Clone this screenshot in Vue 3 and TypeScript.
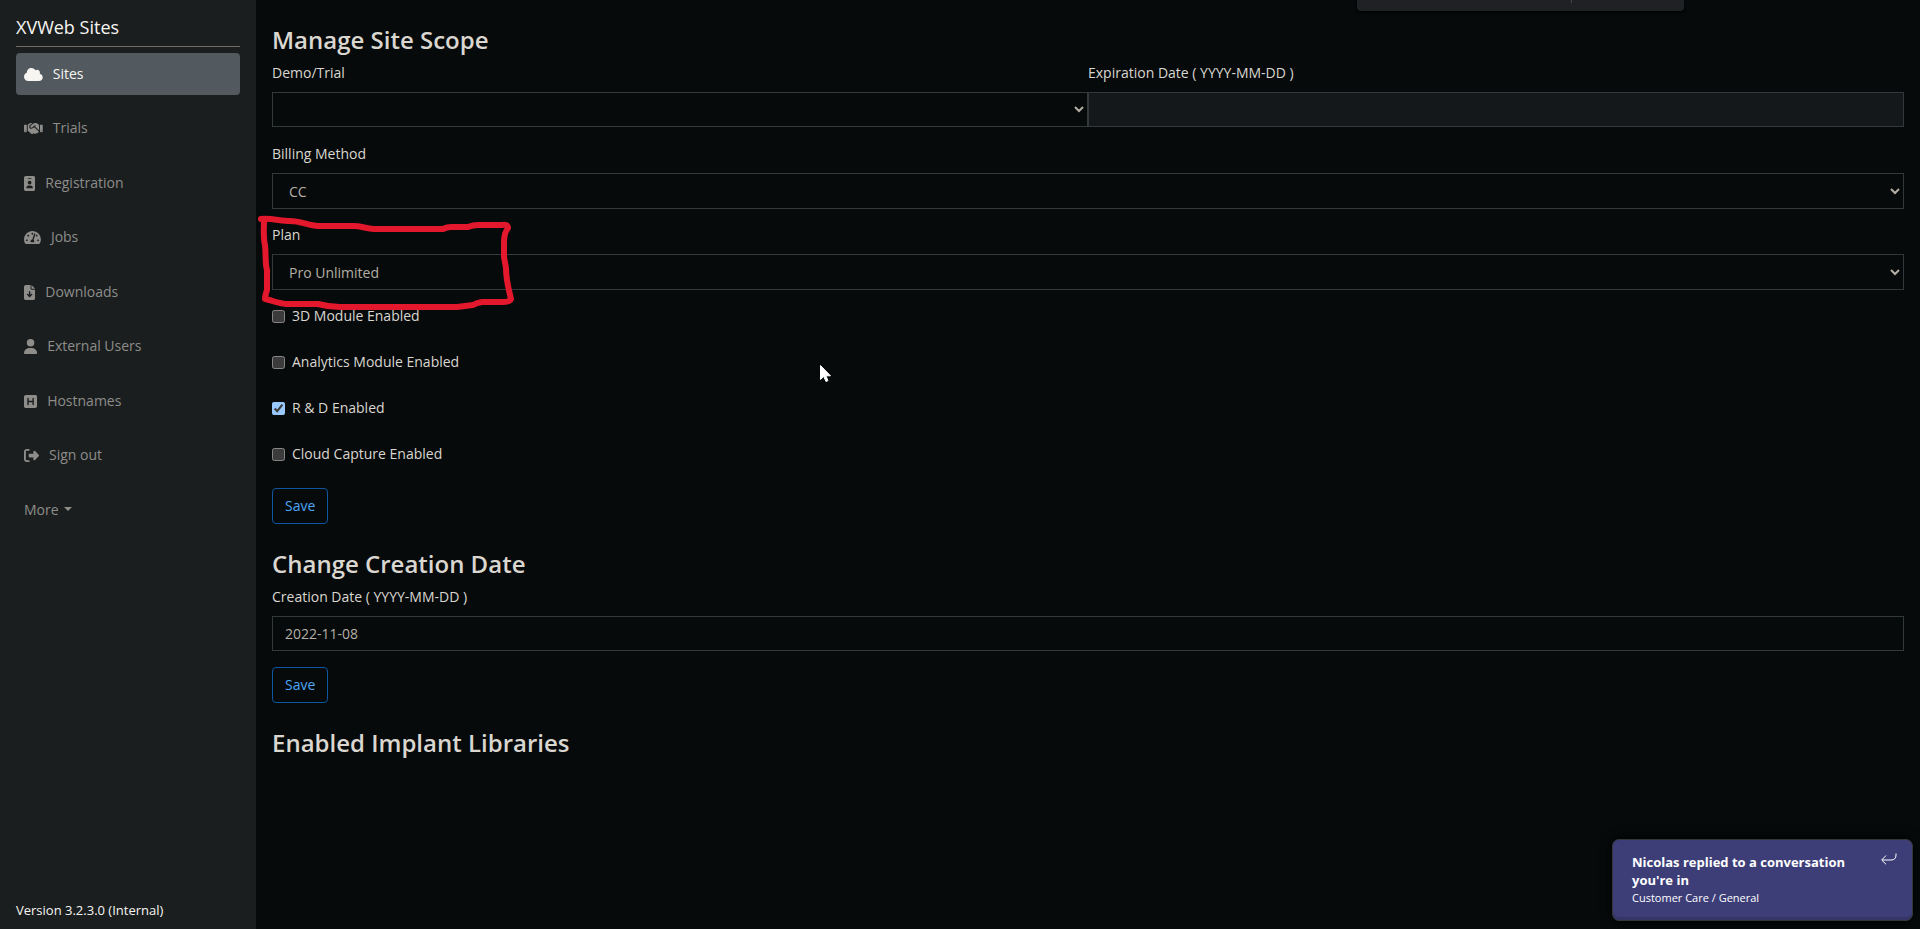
<script setup lang="ts">
import { ref } from 'vue'

interface NavItem {
  label: string
  width: number
  path: string
}

const navItems: NavItem[] = [
  {
    label: 'Sites',
    width: 640,
    path: 'M0 336c0 79.5 64.5 144 144 144l368 0c70.7 0 128-57.3 128-128c0-61.9-44-113.6-102.4-125.4c4.1-10.7 6.4-22.4 6.4-34.6c0-53-43-96-96-96c-19.7 0-38.1 6-53.3 16.2C367 64.2 315.3 32 256 32C167.6 32 96 103.6 96 192c0 2.7 .1 5.4 .2 8.1C40.2 219.8 0 273.2 0 336z',
  },
  {
    label: 'Trials',
    width: 640,
    path: 'M323.4 85.2l-96.8 78.4c-16.1 13-19.2 36.4-7 53.1c12.9 17.8 38 21.3 55.3 7.8l99.3-77.2c7-5.4 17-4.2 22.5 2.8s4.2 17-2.8 22.5l-20.9 16.2L512 316.8V128h-.7l-3.9-2.5L434.8 79c-15.3-9.8-33.2-15-51.4-15c-21.8 0-43 7.5-60 21.2zm22.8 124.4l-51.7 40.2C263 274.3 217.3 268 193.7 235.6c-22.2-30.5-16.6-73.1 12.7-96.8l83.2-67.3c-11.6-4.9-24.1-7.4-36.8-7.4C234 64 215.7 69.6 200 80l-72 48V352h28.2l91.4 83.4c19.6 17.9 49.9 16.5 67.8-3.1c5.5-6.1 9.2-13.2 11.1-20.6l17 15.6c19.5 17.9 49.9 16.6 67.8-2.9c4.5-4.9 7.8-10.6 9.9-16.5c19.4 13 45.8 10.3 62.1-7.5c17.9-19.5 16.6-49.9-2.9-67.8l-134.2-123zM16 128c-8.8 0-16 7.2-16 16V352c0 17.7 14.3 32 32 32H64c17.7 0 32-14.3 32-32V128H16zM48 320a16 16 0 1 1 0 32 16 16 0 1 1 0-32zM544 128V352c0 17.7 14.3 32 32 32h32c17.7 0 32-14.3 32-32V144c0-8.8-7.2-16-16-16H544zm32 208a16 16 0 1 1 32 0 16 16 0 1 1 -32 0z',
  },
  {
    label: 'Registration',
    width: 384,
    path: 'M64 0C28.7 0 0 28.7 0 64V448c0 35.3 28.7 64 64 64H320c35.3 0 64-28.7 64-64V64c0-35.3-28.7-64-64-64H64zm96 320h64c44.2 0 80 35.8 80 80c0 8.8-7.2 16-16 16H96c-8.8 0-16-7.2-16-16c0-44.2 35.8-80 80-80zm-32-96a64 64 0 1 1 128 0 64 64 0 1 1 -128 0zM144 64h96c8.8 0 16 7.2 16 16s-7.2 16-16 16H144c-8.8 0-16-7.2-16-16s7.2-16 16-16z',
  },
  {
    label: 'Jobs',
    width: 576,
    path: 'M288 32C128.94 32 0 160.94 0 320c0 52.8 14.25 102.26 39.06 144.8 5.61 9.62 16.3 15.2 27.44 15.2h443c11.14 0 21.83-5.58 27.44-15.2C561.75 422.26 576 372.8 576 320c0-159.06-128.94-288-288-288zm0 64c14.71 0 26.58 10.13 30.32 23.65-1.11 2.26-2.64 4.23-3.45 6.67l-9.22 27.67c-5.13 3.49-10.97 6.01-17.64 6.01-17.67 0-32-14.33-32-32S270.33 96 288 96zM96 384c-17.67 0-32-14.33-32-32s14.33-32 32-32 32 14.33 32 32-14.33 32-32 32zm48-160c-17.67 0-32-14.33-32-32s14.33-32 32-32 32 14.33 32 32-14.33 32-32 32zm246.77-72.41l-61.33 184C343.13 347.33 352 364.54 352 384c0 11.72-3.38 22.55-8.88 32H232.88c-5.5-9.45-8.88-20.28-8.88-32 0-33.94 26.5-61.43 59.9-63.59l61.34-184.01c4.17-12.56 17.73-19.45 30.36-15.17 12.57 4.19 19.35 17.79 15.17 30.36zm14.66 57.2l15.52-46.55c3.47-1.29 7.13-2.23 11.05-2.23 17.67 0 32 14.33 32 32s-14.33 32-32 32c-11.38-.01-20.89-6.28-26.57-15.22zM480 384c-17.67 0-32-14.33-32-32s14.33-32 32-32 32 14.33 32 32-14.33 32-32 32z',
  },
  {
    label: 'Downloads',
    width: 384,
    path: 'M64 0C28.7 0 0 28.7 0 64V448c0 35.3 28.7 64 64 64H320c35.3 0 64-28.7 64-64V160H256c-17.7 0-32-14.3-32-32V0H64zM256 0V128H384L256 0zM216 232V334.1l31-31c9.4-9.4 24.6-9.4 33.9 0s9.4 24.6 0 33.9l-72 72c-9.4 9.4-24.6 9.4-33.9 0l-72-72c-9.4-9.4-9.4-24.6 0-33.9s24.6-9.4 33.9 0l31 31V232c0-13.3 10.7-24 24-24s24 10.7 24 24z',
  },
  {
    label: 'External Users',
    width: 448,
    path: 'M224 256A128 128 0 1 0 224 0a128 128 0 1 0 0 256zm-45.7 48C79.8 304 0 383.8 0 482.3C0 498.7 13.3 512 29.7 512H418.3c16.4 0 29.7-13.3 29.7-29.7C448 383.8 368.2 304 269.7 304H178.3z',
  },
  {
    label: 'Hostnames',
    width: 448,
    path: 'M64 32C28.7 32 0 60.7 0 96V416c0 35.3 28.7 64 64 64H384c35.3 0 64-28.7 64-64V96c0-35.3-28.7-64-64-64H64zM336 152V256 360c0 13.3-10.7 24-24 24s-24-10.7-24-24V280H160l0 80c0 13.3-10.7 24-24 24s-24-10.7-24-24l0-208c0-13.3 10.7-24 24-24s24 10.7 24 24v80H288V152c0-13.3 10.7-24 24-24s24 10.7 24 24z',
  },
  {
    label: 'Sign out',
    width: 512,
    path: 'M377.9 105.9L500.7 228.7c7.2 7.2 11.3 17.1 11.3 27.3s-4.1 20.1-11.3 27.3L377.9 406.1c-6.4 6.4-15 9.9-24 9.9c-18.7 0-33.9-15.2-33.9-33.9l0-62.1-128 0c-17.7 0-32-14.3-32-32l0-64c0-17.7 14.3-32 32-32l128 0 0-62.1c0-18.7 15.2-33.9 33.9-33.9c9 0 17.6 3.6 24 9.9zM160 96L96 96c-17.7 0-32 14.3-32 32l0 256c0 17.7 14.3 32 32 32l64 0c17.7 0 32 14.3 32 32s-14.3 32-32 32l-64 0c-53 0-96-43-96-96L0 128C0 75 43 32 96 32l64 0c17.7 0 32 14.3 32 32s-14.3 32-32 32z',
  },
]

const active = ref('Sites')
const demo = ref('')
const expiration = ref('')
const billing = ref('CC')
const plan = ref('Pro Unlimited')
const creationDate = ref('2022-11-08')

const modules = ref([
  { id: 'module-3d', label: '3D Module Enabled', enabled: false },
  { id: 'module-analytics', label: 'Analytics Module Enabled', enabled: false },
  { id: 'module-rd', label: 'R & D Enabled', enabled: true },
  { id: 'module-capture', label: 'Cloud Capture Enabled', enabled: false },
])
</script>

<template>
  <div class="layout">
    <aside class="sidebar">
      <a class="brand" href="#">XVWeb Sites</a>
      <nav>
        <ul class="nav-list">
          <li v-for="item in navItems" :key="item.label">
            <a
              class="nav-link"
              :class="{ active: item.label === active }"
              href="#"
              @click.prevent="active = item.label"
            >
              <svg class="nav-icon" :viewBox="`0 0 ${item.width} 512`" aria-hidden="true">
                <path :d="item.path" />
              </svg>
              <span>{{ item.label }}</span>
            </a>
          </li>
          <li>
            <button class="nav-link more" type="button">More<span class="caret"></span></button>
          </li>
        </ul>
      </nav>
      <div class="version">Version 3.2.3.0 (Internal)</div>
    </aside>

    <main class="content">
      <form class="section" @submit.prevent>
        <h2>Manage Site Scope</h2>
        <div class="row">
          <div class="field">
            <label for="demo">Demo/Trial</label>
            <select id="demo" v-model="demo" class="control">
              <option value=""></option>
            </select>
          </div>
          <div class="field">
            <label for="expiration">Expiration Date ( YYYY-MM-DD )</label>
            <input id="expiration" v-model="expiration" class="control" type="text" disabled />
          </div>
        </div>
        <div class="field">
          <label for="billing">Billing Method</label>
          <select id="billing" v-model="billing" class="control tall">
            <option>CC</option>
          </select>
        </div>
        <div class="field plan">
          <label for="plan">Plan</label>
          <select id="plan" v-model="plan" class="control tall">
            <option>Pro Unlimited</option>
          </select>
          <svg class="markup" viewBox="256 214 262 100" aria-hidden="true">
            <path
              d="M261 219C271 218 281 221 290 221C300 221 308 225 318 226L353 226C361 226 368 229 377 229L443 229Q447 227 451 227L468 227Q473 225 478 225L502 225Q508 224 508 228Q504 233 504 242L504 257L506 268C506 281 509 290 511 299Q510 302 502 302L482 302Q476 303 473 305L457 307L340 307Q329 307 318 304L287 304C280 304 271 300 265 299Q265 296 267 290L267 270C265 264 266 254 265 245C263 237 264 229 264 221"
            />
          </svg>
        </div>
        <div class="checks">
          <div v-for="m in modules" :key="m.id" class="check">
            <input :id="m.id" v-model="m.enabled" type="checkbox" />
            <label :for="m.id">{{ m.label }}</label>
          </div>
        </div>
        <button class="save" type="submit">Save</button>
      </form>

      <form class="section" @submit.prevent>
        <h2>Change Creation Date</h2>
        <div class="field">
          <label for="creation">Creation Date ( YYYY-MM-DD )</label>
          <input id="creation" v-model="creationDate" class="control" type="text" />
        </div>
        <button class="save" type="submit">Save</button>
      </form>

      <section class="section">
        <h2>Enabled Implant Libraries</h2>
      </section>
    </main>

    <div class="top-panel"></div>

    <div class="toast" role="status">
      <div>
        <div class="toast-title">Nicolas replied to a conversation you're in</div>
        <div class="toast-sub">Customer Care / General</div>
      </div>
      <svg class="reply" viewBox="0 0 16 12" aria-hidden="true">
        <path d="M15 0.5V2Q15 7 10 7H1M5 2.5L0.7 7L5 11.3" />
      </svg>
    </div>

    <svg class="pointer" viewBox="0 0 12 18" aria-hidden="true">
      <path d="M0.5 0.5V14.5L3.7 11.5L6 16.5L8 15.6L5.9 10.8H10.5Z" />
    </svg>
  </div>
</template>

<style>
body {
  margin: 0;
  background: #060a0b;
}
</style>

<style scoped>
.layout {
  display: flex;
  position: relative;
  min-height: 100vh;
  background: #060a0b;
  color: #dad6d0;
  color-scheme: dark;
  font-family: "Open Sans", "Noto Sans", sans-serif;
  font-size: 14px;
  line-height: 20px;
  overflow: hidden;
}

.layout *,
.layout *::before {
  box-sizing: border-box;
}

.sidebar {
  display: flex;
  flex: 0 0 256px;
  flex-direction: column;
  padding: 8px 16px;
  background: #1a1e1f;
}

.brand {
  display: block;
  padding: 6px 0;
  margin-bottom: 6px;
  border-bottom: 1px solid #776c5f;
  color: #f7f5f2;
  font-size: 18px;
  line-height: 26px;
  text-decoration: none;
}

.nav-list {
  margin: 0;
  padding: 0;
  list-style: none;
}

.nav-list li {
  padding-bottom: 12px;
}

.nav-list li:nth-child(even) {
  padding-bottom: 13px;
}

.nav-link {
  display: flex;
  align-items: center;
  gap: 10px;
  width: 100%;
  padding: 10px 8px;
  border: 0;
  border-radius: 4px;
  background: none;
  color: #8e8d8a;
  font-family: inherit;
  font-size: 14px;
  line-height: 22px;
  text-decoration: none;
}

.nav-link.active {
  background: #525a60;
  color: #f7f5f2;
}

.nav-icon {
  height: 15px;
  fill: currentColor;
}

.nav-link.more {
  gap: 5px;
}

.caret {
  margin-bottom: 3px;
  border: 4px solid transparent;
  border-top-color: currentColor;
  border-bottom: 0;
}

.version {
  margin-top: auto;
  padding-bottom: 1px;
  color: #f7f5f2;
  font-size: 13px;
}

.content {
  flex: 1;
  min-width: 0;
  padding: 24px 16px;
}

.section {
  margin-bottom: 24px;
}

h2 {
  margin: 0 0 7px;
  font-size: 24px;
  font-weight: 600;
  line-height: 32px;
}

.row {
  display: flex;
  padding-bottom: 1px;
}

.row .field {
  flex: 1;
}

.field {
  display: flex;
  flex-direction: column;
  gap: 9px;
  margin-bottom: 16px;
}

.control {
  width: 100%;
  height: 35px;
  padding: 6px 12px;
  border: 1px solid #33383b;
  border-radius: 0;
  background-color: #060a0b;
  color: #b5afa5;
  font-family: inherit;
  font-size: 14px;
  line-height: 20px;
}

.control.tall {
  height: 36px;
}

.control:disabled {
  background-color: #14181b;
}

.plan {
  position: relative;
}

.markup {
  position: absolute;
  top: -11px;
  left: -16px;
  width: 262px;
  height: 100px;
  fill: none;
  stroke: #e3182d;
  stroke-width: 6;
  stroke-linecap: round;
  stroke-linejoin: round;
  pointer-events: none;
}

.checks {
  display: flex;
  flex-direction: column;
  gap: 26px;
  margin-bottom: 24px;
}

.check {
  display: flex;
  align-items: center;
  gap: 7px;
}

.check input {
  width: 13px;
  height: 13px;
  margin: 0;
}

.save {
  height: 36px;
  padding: 0 12px;
  border: 1px solid #0d559f;
  border-radius: 4px;
  background: transparent;
  color: #4da6f5;
  font-family: inherit;
  font-size: 14px;
  line-height: 20px;
}

.top-panel {
  position: absolute;
  top: 0;
  right: 236px;
  width: 327px;
  height: 11px;
  border-radius: 0 0 4px 4px;
  background: #202124;
  box-shadow: 0 1px 3px #000;
}

.top-panel::before {
  content: "";
  position: absolute;
  top: 0;
  left: 214px;
  width: 1px;
  height: 3px;
  background: #45474b;
}

.toast {
  display: flex;
  position: absolute;
  right: 7px;
  bottom: 8px;
  justify-content: space-between;
  width: 301px;
  padding: 13px 15px 13px 19px;
  border: 1px solid #35353c;
  border-radius: 7px;
  background: #3d3e78;
  box-shadow: inset 0 -3px #353667, 0 0 12px #000;
  color: #fff;
}

.toast-title {
  max-width: 220px;
  font-size: 13px;
  font-weight: 700;
  line-height: 18px;
}

.toast-sub {
  font-size: 11px;
  line-height: 18px;
}

.reply {
  width: 16px;
  height: 12px;
  fill: none;
  stroke: #fff;
  stroke-width: 1;
}

.pointer {
  position: absolute;
  top: 365px;
  left: 820px;
  width: 12px;
  height: 18px;
  fill: #fff;
  stroke: #fff;
  stroke-width: 1;
  pointer-events: none;
}
</style>
